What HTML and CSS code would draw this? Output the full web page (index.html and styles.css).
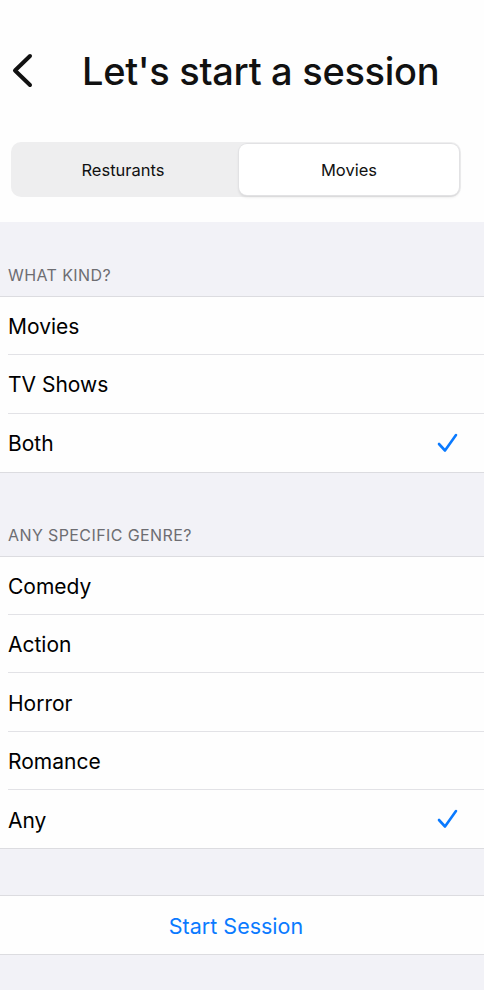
FILE: index.html
```html
<!DOCTYPE html>
<html lang="en">
<head>
    <meta charset="UTF-8">
    <meta name="viewport" content="width=device-width, initial-scale=1.0">
    <title>Let's start a session</title>
    <link rel="stylesheet" href="styles.css">
</head>
<body>

    <div class="top">
        <div class="title-bar">
            <button class="back" aria-label="Back">
                <svg width="24" height="36" viewBox="0 0 24 36">
                    <polyline points="19,3 4,17.5 19,32" fill="none" stroke="#111" stroke-width="4" stroke-linecap="round" stroke-linejoin="round"/>
                </svg>
            </button>
            <h1>Let's start a session</h1>
        </div>

        <div class="segments">
            <div class="segment">Resturants</div>
            <div class="segment active">Movies</div>
        </div>
    </div>

    <div class="form">
        <div class="section-header first">WHAT KIND?</div>
        <div class="group">
            <div class="row"><div class="row-inner">Movies</div></div>
            <div class="row"><div class="row-inner">TV Shows</div></div>
            <div class="row"><div class="row-inner">Both <span class="check"><svg width="24" height="24" viewBox="0 0 24 24"><polyline points="3,12 9,18.5 20,3" fill="none" stroke="#0a7aff" stroke-width="2.6" stroke-linecap="round" stroke-linejoin="round"/></svg></span></div></div>
        </div>

        <div class="section-header">ANY SPECIFIC GENRE?</div>
        <div class="group">
            <div class="row"><div class="row-inner">Comedy</div></div>
            <div class="row"><div class="row-inner">Action</div></div>
            <div class="row"><div class="row-inner">Horror</div></div>
            <div class="row"><div class="row-inner">Romance</div></div>
            <div class="row"><div class="row-inner">Any <span class="check"><svg width="24" height="24" viewBox="0 0 24 24"><polyline points="3,12 9,18.5 20,3" fill="none" stroke="#0a7aff" stroke-width="2.6" stroke-linecap="round" stroke-linejoin="round"/></svg></span></div></div>
        </div>

        <div class="spacer"></div>
        <div class="group">
            <button class="start">Start Session</button>
        </div>
    </div>

</body>
</html>
```

FILE: styles.css
```css
body {
    margin: 0;
    font-family: Inter, "Liberation Sans", sans-serif;
    background-color: #f2f2f7;
    color: #000;
}
.top {
    background: #fefefe;
    height: 222px;
    padding-top: 42px;
    box-sizing: border-box;
}
.title-bar {
    display: flex;
    align-items: center;
    height: 58px;
}
.back {
    border: none;
    background: none;
    padding: 0;
    margin-left: 11px;
    width: 24px;
    height: 36px;
    display: flex;
}
h1 {
    margin: 0 0 0 47px;
    font-size: 38px;
    font-weight: 500;
    letter-spacing: -0.3px;
    color: #111;
}
.segments {
    display: flex;
    gap: 6px;
    margin: 42px 23px 0 11px;
    height: 55px;
    background: #eeeeef;
    border-radius: 10px;
    padding: 2px;
    box-sizing: border-box;
}
.segment {
    flex: 1;
    display: flex;
    align-items: center;
    justify-content: center;
    font-size: 16.5px;
    font-weight: 400;
    color: #111;
    border-radius: 8px;
}
.segment.active {
    background: #fff;
    box-shadow: 0 0 0 1px #e2e2e4, 0 2px 3px rgba(0, 0, 0, 0.12);
}
.section-header {
    height: 83px;
    box-sizing: border-box;
    display: flex;
    align-items: flex-end;
    padding: 0 8px 11px;
    font-size: 16px;
    color: #6d6d72;
    letter-spacing: 0.4px;
}
.section-header.first {
    height: 74px;
}
.group {
    background: #fefefe;
    border-top: 1px solid #dcdce0;
    border-bottom: 1px solid #dcdce0;
}
.row {
    padding-left: 8px;
}
.row-inner {
    height: 58.3px;
    box-sizing: border-box;
    border-bottom: 1px solid #e2e2e6;
    display: flex;
    align-items: center;
    justify-content: space-between;
    padding: 2px 24px 0 0;
    font-size: 21px;
}
.row:last-child .row-inner {
    border-bottom: none;
}
.check {
    display: flex;
}
.spacer {
    height: 46px;
}
.start {
    display: block;
    width: 100%;
    height: 58px;
    border: none;
    background: none;
    font-family: inherit;
    font-size: 21.5px;
    color: #0a7aff;
    padding: 2px 12px 0 0;
}
```
